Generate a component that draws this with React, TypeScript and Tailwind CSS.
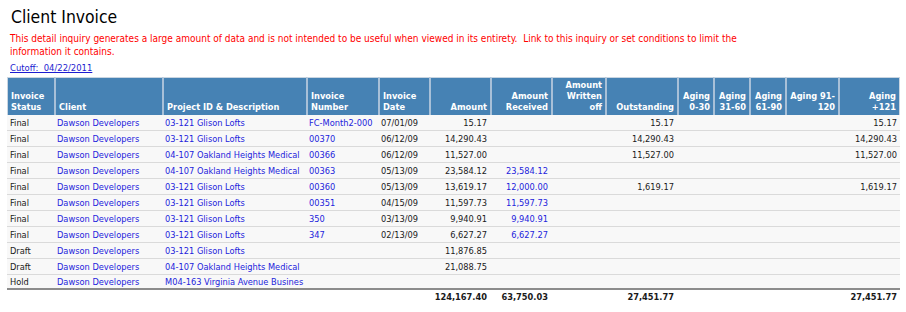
const cols = [47, 108, 144, 72, 51, 61, 61, 54, 72, 36, 36, 36, 53, 62];

const headers: { label: string[]; right?: boolean }[] = [
  { label: ["Invoice", "Status"] },
  { label: ["Client"] },
  { label: ["Project ID & Description"] },
  { label: ["Invoice", "Number"] },
  { label: ["Invoice", "Date"] },
  { label: ["Amount"], right: true },
  { label: ["Amount", "Received"], right: true },
  { label: ["Amount", "Written", "off"], right: true },
  { label: ["Outstanding"], right: true },
  { label: ["Aging", "0-30"], right: true },
  { label: ["Aging", "31-60"], right: true },
  { label: ["Aging", "61-90"], right: true },
  { label: ["Aging 91-", "120"], right: true },
  { label: ["Aging", "+121"], right: true },
];

type Row = {
  status: string;
  project: string;
  number: string;
  date: string;
  amount: string;
  received: string;
  outstanding: string;
  aging121: string;
};

const rows: Row[] = [
  { status: "Final", project: "03-121 Glison Lofts", number: "FC-Month2-000", date: "07/01/09", amount: "15.17", received: "", outstanding: "15.17", aging121: "15.17" },
  { status: "Final", project: "03-121 Glison Lofts", number: "00370", date: "06/12/09", amount: "14,290.43", received: "", outstanding: "14,290.43", aging121: "14,290.43" },
  { status: "Final", project: "04-107 Oakland Heights Medical", number: "00366", date: "06/12/09", amount: "11,527.00", received: "", outstanding: "11,527.00", aging121: "11,527.00" },
  { status: "Final", project: "04-107 Oakland Heights Medical", number: "00363", date: "05/13/09", amount: "23,584.12", received: "23,584.12", outstanding: "", aging121: "" },
  { status: "Final", project: "03-121 Glison Lofts", number: "00360", date: "05/13/09", amount: "13,619.17", received: "12,000.00", outstanding: "1,619.17", aging121: "1,619.17" },
  { status: "Final", project: "03-121 Glison Lofts", number: "00351", date: "04/15/09", amount: "11,597.73", received: "11,597.73", outstanding: "", aging121: "" },
  { status: "Final", project: "03-121 Glison Lofts", number: "350", date: "03/13/09", amount: "9,940.91", received: "9,940.91", outstanding: "", aging121: "" },
  { status: "Final", project: "03-121 Glison Lofts", number: "347", date: "02/13/09", amount: "6,627.27", received: "6,627.27", outstanding: "", aging121: "" },
  { status: "Draft", project: "03-121 Glison Lofts", number: "", date: "", amount: "11,876.85", received: "", outstanding: "", aging121: "" },
  { status: "Draft", project: "04-107 Oakland Heights Medical", number: "", date: "", amount: "21,088.75", received: "", outstanding: "", aging121: "" },
  { status: "Hold", project: "M04-163 Virginia Avenue Busines", number: "", date: "", amount: "", received: "", outstanding: "", aging121: "" },
];

const font = "font-['DejaVu_Sans_Condensed','DejaVu_Sans',sans-serif] font-stretch-condensed";
const link = "text-[#2323dc]";

export default function App() {
  return (
    <div className={`w-[906px] h-[312px] bg-white text-[#1a1a1a] ${font} overflow-hidden`}>
      <h1 className="pl-[11px] pt-[6px] text-[17.4px] leading-[22px] font-normal text-black">Client Invoice</h1>
      <p className="pl-[10px] mt-[4px] text-[10px] leading-[13px] text-[#f00]">
        This detail inquiry generates a large amount of data and is not intended to be useful when viewed in its entirety.&nbsp; Link to this inquiry or set conditions to limit the
        <br />
        information it contains.
      </p>
      <a href="#" className="block pl-[10px] mt-[3px] text-[9.4px] leading-[13px] text-[#1c1cd0] underline w-fit">
        Cutoff:&nbsp; 04/22/2011
      </a>
      <table className="ml-[7px] mt-[3px] w-[893px] table-fixed border-separate border-spacing-0 text-[9.2px]">
        <colgroup>
          {cols.map((w, i) => (
            <col key={i} style={{ width: w }} />
          ))}
        </colgroup>
        <thead>
          <tr className="h-[38px]">
            {headers.map((h, i) => (
              <th
                key={i}
                className={[
                  "bg-[#4682b4] text-white font-bold align-bottom px-[3px] pb-[3px] leading-[11px] border-t border-t-[#c9d5e1]",
                  i === 0 ? "border-l border-l-[#c9d5e1]" : "border-l-2 border-l-[#a8c0d8]",
                  i === headers.length - 1 ? "border-r border-r-[#c9d5e1]" : "",
                  h.right ? "text-right" : "text-left",
                ].join(" ")}
              >
                {h.label.map((l, j) => (
                  <div key={j} className="whitespace-nowrap">
                    {l}
                  </div>
                ))}
              </th>
            ))}
          </tr>
        </thead>
        <tbody>
          {rows.map((r, i) => {
            const last = i === rows.length - 1;
            const td = [
              "px-[3px] whitespace-nowrap overflow-hidden bg-[#f8f8f8]",
              last ? "border-b-2 border-b-[#8c8c8c] leading-[13px]" : "border-b border-b-[#dadada] leading-[15px]",
            ].join(" ");
            return (
              <tr key={i} className={last ? "h-[15px]" : "h-[16px]"}>
                <td className={td}>{r.status}</td>
                <td className={`${td} ${link}`}>Dawson Developers</td>
                <td className={`${td} ${link} text-clip`}>{r.project}</td>
                <td className={`${td} ${link}`}>{r.number}</td>
                <td className={td}>{r.date}</td>
                <td className={`${td} text-right`}>{r.amount}</td>
                <td className={`${td} text-right ${link}`}>{r.received}</td>
                <td className={td}></td>
                <td className={`${td} text-right`}>{r.outstanding}</td>
                <td className={td}></td>
                <td className={td}></td>
                <td className={td}></td>
                <td className={td}></td>
                <td className={`${td} text-right`}>{r.aging121}</td>
              </tr>
            );
          })}
          <tr className="h-[14px] font-bold leading-[14px]">
            <td className="px-[3px]" colSpan={5}></td>
            <td className="px-[3px] text-right">124,167.40</td>
            <td className="px-[3px] text-right">63,750.03</td>
            <td></td>
            <td className="px-[3px] text-right">27,451.77</td>
            <td></td>
            <td></td>
            <td></td>
            <td></td>
            <td className="px-[3px] text-right">27,451.77</td>
          </tr>
        </tbody>
      </table>
    </div>
  );
}
